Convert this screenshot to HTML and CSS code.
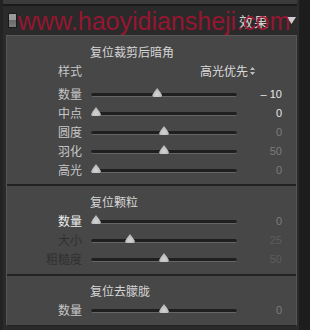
FILE: index.html
```html
<!DOCTYPE html>
<html lang="zh">
<head>
<meta charset="UTF-8" />
<title>效果</title>
<link rel="stylesheet" href="styles.css">
</head>
<body>
<div class="frame">
  <div class="main">
    <div class="topstrip"></div>
    <div class="header">
      <span class="toggle"></span>
      <span class="header-title">效果</span>
      <svg class="header-arrow" width="9" height="7" viewBox="0 0 9 7"><path d="M0 0 L9 0 L4.5 7 Z" fill="#cfcfcf"/></svg>
      <div class="watermark">www.haoyidiansheji.com</div>
    </div>
    <div class="panel">
      <div class="section first">
        <div class="title">复位裁剪后暗角</div>
        <div class="row style-row">
          <span class="label">样式</span>
          <span class="select">高光优先 <svg width="5" height="8" viewBox="0 0 5 8"><path d="M0 3 L2.5 0 L5 3 Z M0 5 L2.5 8 L5 5 Z" fill="#bdbdbd"/></svg></span>
        </div>
        <div class="row"><span class="label">数量</span><div class="track"><span class="thumb" style="--p:45"></span></div><span class="value bright">– 10</span></div>
        <div class="row"><span class="label">中点</span><div class="track"><span class="thumb" style="--p:0"></span></div><span class="value bright">0</span></div>
        <div class="row"><span class="label">圆度</span><div class="track"><span class="thumb" style="--p:50"></span></div><span class="value">0</span></div>
        <div class="row"><span class="label">羽化</span><div class="track"><span class="thumb" style="--p:50"></span></div><span class="value">50</span></div>
        <div class="row"><span class="label">高光</span><div class="track"><span class="thumb" style="--p:0"></span></div><span class="value">0</span></div>
      </div>
      <div class="section second">
        <div class="title">复位颗粒</div>
        <div class="row"><span class="label white">数量</span><div class="track"><span class="thumb" style="--p:0"></span></div><span class="value">0</span></div>
        <div class="row off"><span class="label">大小</span><div class="track"><span class="thumb" style="--p:25"></span></div><span class="value">25</span></div>
        <div class="row off"><span class="label">粗糙度</span><div class="track"><span class="thumb" style="--p:50"></span></div><span class="value">50</span></div>
      </div>
      <div class="section third">
        <div class="title">复位去朦胧</div>
        <div class="row"><span class="label">数量</span><div class="track"><span class="thumb" style="--p:50"></span></div><span class="value">0</span></div>
      </div>
    </div>
  </div>
  <div class="rightstrip"></div>
</div>
</body>
</html>
```

FILE: styles.css
```css
body {
  margin: 0;
  background: #2a2a2a;
  font-family: "Noto Sans CJK SC", "Noto Sans", sans-serif;
}
.frame {
  display: flex;
  width: 310px;
  height: 330px;
  overflow: hidden;
}
.main {
  width: 297px;
  display: flex;
  flex-direction: column;
  padding-left: 4px;
  box-sizing: border-box;
  border-left: 3px solid #232323;
}
.rightstrip {
  flex: 1;
  background: #1d1d1d;
  border-left: 2px solid #2c2c2c;
}
.topstrip {
  height: 4px;
  background: #3b3b3b;
  border-bottom: 2px solid #1a1a1a;
  margin-left: -4px;
}
.header {
  position: relative;
  height: 29px;
  display: flex;
  align-items: center;
  background: #2a2a2a;
}
.toggle {
  width: 7px;
  height: 13px;
  margin-left: 1px;
  background: linear-gradient(#9a9a9a, #9a9a9a 45%, #6a6a6a 50%, #7c7c7c);
  border: 1px solid #1a1a1a;
}
.header-title {
  margin-left: auto;
  font-size: 14px;
  color: #d2d2d2;
  letter-spacing: 1px;
}
.header-arrow {
  margin: 0 1px 0 18px;
}
.watermark {
  position: absolute;
  left: 11px;
  top: 3px;
  font-family: "Liberation Sans", Arial, sans-serif;
  font-size: 25px;
  line-height: 25px;
  color: rgba(170, 18, 50, 0.85);
  white-space: nowrap;
}
.panel {
  flex: 1;
  background: #474747;
  border-top: 1px solid #5a5a5a;
  border-left: 1px solid #555;
  border-right: 1px solid #555;
  border-bottom: 1px solid #222;
  margin-left: -1px;
  margin-bottom: 4px;
  width: 291px;
  box-sizing: border-box;
}
.section {
  border-bottom: 2px solid #222;
}
.section.first {
  padding: 6px 0 5px;
}
.section.second {
  padding: 6px 0 6px;
}
.section.third {
  padding: 5px 0 5px;
  border-bottom: none;
}
.title {
  height: 19px;
  line-height: 19px;
  padding-left: 83px;
  font-size: 12px;
  color: #d6d6d6;
}
.row {
  height: 19px;
  display: flex;
  align-items: center;
}
.style-row {
  margin-bottom: 4px;
}
.label {
  width: 75px;
  text-align: right;
  font-size: 12px;
  color: #c6c6c6;
}
.label.white {
  color: #eeeeee;
}
.select {
  margin-left: 118px;
  font-size: 12px;
  color: #dcdcdc;
  display: flex;
  align-items: center;
  gap: 2px;
}
.track {
  position: relative;
  width: 146px;
  height: 3px;
  margin-left: 9px;
  margin-top: 3px;
  background: #1f1f1f;
  border-radius: 2px;
  border-bottom: 1px solid #666;
}
.thumb {
  position: absolute;
  bottom: -1px;
  left: calc((100% - 10px) * var(--p) / 100);
  width: 10px;
  height: 9px;
  background: radial-gradient(circle at 50% 70%, #d4d4d4, #a8a8a8);
  clip-path: polygon(50% 0, 80% 45%, 100% 80%, 90% 100%, 10% 100%, 0 80%, 20% 45%);
}
.value {
  width: 45px;
  text-align: right;
  font-family: "Liberation Sans", Arial, sans-serif;
  font-size: 11px;
  color: #7c7c7c;
}
.value.bright {
  color: #e6e6e6;
}
.row.off .label {
  color: #303030;
}
.row.off .value {
  color: #5c5c5c;
}
```
